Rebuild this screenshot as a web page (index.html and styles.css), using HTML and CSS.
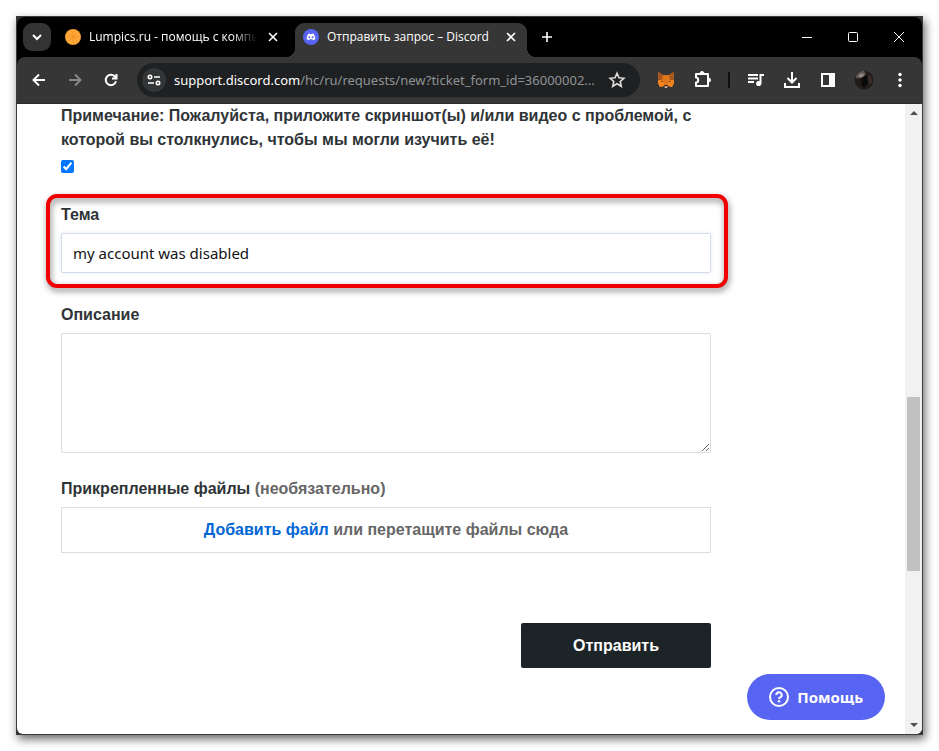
FILE: index.html
```
<!DOCTYPE html>
<html lang="ru">
<head>
    <meta charset="UTF-8">
    <meta name="viewport" content="width=device-width, initial-scale=1.0">
    <title>Отправить запрос – Discord</title>
    <link rel="stylesheet" href="styles.css">
</head>
<body>

    <div class="window">
        <div class="tab-strip">
            <button class="tab-search" type="button" aria-label="Поиск вкладок">
                <svg width="16" height="16" viewBox="0 0 16 16"><path d="M4 6l4 4 4-4"/></svg>
            </button>

            <div class="tab">
                <svg class="favicon" width="16" height="16" viewBox="0 0 16 16">
                    <circle cx="8" cy="8" r="8" fill="#f39a2c"/>
                    <circle cx="8" cy="8" r="7" fill="#ffa93a"/>
                    <path d="M8 2v12M2 8h12M4 4l8 8M12 4l-8 8" stroke="#f39422" stroke-width="1"/>
                </svg>
                <span class="tab-title tab-title-faded">Lumpics.ru - помощь с компь</span>
                <button class="tab-close" type="button" aria-label="Закрыть">
                    <svg width="16" height="16" viewBox="0 0 16 16"><path d="M4 4l8 8M12 4l-8 8"/></svg>
                </button>
            </div>

            <div class="tab tab-active">
                <svg class="favicon" width="16" height="16" viewBox="0 0 16 16">
                    <circle cx="8" cy="8" r="8" fill="#5865f2"/>
                    <path d="M5.200 4.900l1.500-.5.4.6h1.800l.4-.6 1.500.5c1 1.500 1.600 3.200 1.500 5.200-.6.6-1.400.9-2.200 1.100l-.6-.9h-3l-.6.9c-.8-.2-1.600-.5-2.200-1.100-.1-2 .5-3.700 1.500-5.200z" fill="#fff"/>
                    <circle cx="6.300" cy="8.200" r="1" fill="#5865f2"/>
                    <circle cx="9.700" cy="8.200" r="1" fill="#5865f2"/>
                </svg>
                <span class="tab-title">Отправить запрос – Discord</span>
                <button class="tab-close" type="button" aria-label="Закрыть">
                    <svg width="16" height="16" viewBox="0 0 16 16"><path d="M4 4l8 8M12 4l-8 8"/></svg>
                </button>
            </div>

            <button class="new-tab" type="button" aria-label="Новая вкладка">
                <svg width="16" height="16" viewBox="0 0 16 16"><path d="M8 3v10M3 8h10"/></svg>
            </button>

            <div class="window-controls">
                <button type="button" aria-label="Свернуть"><svg width="12" height="12" viewBox="0 0 12 12"><path d="M1 6.500h10"/></svg></button>
                <button type="button" aria-label="Развернуть"><svg width="12" height="12" viewBox="0 0 12 12"><rect x="1.500" y="1.500" width="9" height="9" rx="1"/></svg></button>
                <button type="button" aria-label="Закрыть окно"><svg width="12" height="12" viewBox="0 0 12 12"><path d="M1 1l10 10M11 1L1 11"/></svg></button>
            </div>
        </div>

        <div class="toolbar">
            <button class="tool" type="button" aria-label="Назад">
                <svg width="20" height="20" viewBox="0 0 20 20"><path d="M16 10H5M10 4.500L4.500 10l5.500 5.500"/></svg>
            </button>
            <button class="tool tool-disabled" type="button" aria-label="Вперёд">
                <svg width="20" height="20" viewBox="0 0 20 20"><path d="M4 10h11M10 4.500l5.500 5.500-5.500 5.500"/></svg>
            </button>
            <button class="tool" type="button" aria-label="Обновить">
                <svg width="20" height="20" viewBox="0 0 20 20"><path d="M15 11.300A5.200 5.200 0 1 1 13.700 6.300L15.500 8M15.500 4v4.500H11"/></svg>
            </button>

            <div class="omnibox">
                <button class="site-info" type="button" aria-label="Сведения о сайте">
                    <svg width="16" height="16" viewBox="0 0 16 16"><circle cx="4" cy="5" r="1.700"/><path d="M8 5h6M2 11h6"/><circle cx="12" cy="11" r="1.700"/></svg>
                </button>
                <span class="url"><span class="url-host">support.discord.com</span>/hc/ru/requests/new?ticket_form_id=36000002...</span>
                <button class="bookmark" type="button" aria-label="Добавить в закладки">
                    <svg width="20" height="20" viewBox="0 0 20 20"><path d="M10 3.300l2 4.500 4.900.5-3.700 3.200 1.100 4.800L10 13.800l-4.300 2.500 1.100-4.800-3.700-3.200 4.900-.5z"/></svg>
                </button>
            </div>

            <div class="extensions">
                <button class="tool" type="button" aria-label="MetaMask">
                    <svg class="filled" width="18" height="18" viewBox="0 0 18 18">
                        <path d="M1 1l5 3h6l5-3-.5 7 .5 4-2 4-4-1-1 1.500H8L7 15l-4 1-2-4 .5-4z" fill="#e2761b"/>
                        <path d="M1 1l5 3-1 5-3.500 0zM17 1l-5 3 1 5 3.500 0z" fill="#a8571f"/>
                        <path d="M1.500 9L6 9l1 6-4 1-2-4zM16.500 9L12 9l-1 6 4 1 2-4z" fill="#f6851b"/>
                        <path d="M4.500 9.500l2 1-2 .5zM13.500 9.500l-2 1 2 .5zM7.500 14h3l.5 1.500H7z" fill="#222c38"/>
                        <path d="M7.500 15.500h3l-.5 1.500H8z" fill="#d7c1b3"/>
                    </svg>
                </button>
                <button class="tool" type="button" aria-label="Расширения">
                    <svg width="20" height="20" viewBox="0 0 20 20"><path d="M4 4h12v12H4v-3.500c3 0 3-5 0-5z" stroke-linejoin="round"/><path d="M8 3.500a2 2 0 0 1 4 0zM16.500 8a2 2 0 0 1 0 4z" fill="#fff" stroke-width="1"/></svg>
                </button>
            </div>
            <span class="divider"></span>
            <button class="tool" type="button" aria-label="Управление мультимедиа">
                <svg width="20" height="20" viewBox="0 0 20 20"><path d="M2 5h10M2 8.500h10M2 12h6M14.500 13.500V5H18"/><circle cx="12.700" cy="13.500" r="1.600" fill="#fff"/></svg>
            </button>
            <button class="tool" type="button" aria-label="Загрузки">
                <svg width="20" height="20" viewBox="0 0 20 20"><path d="M10 2v10M5.500 8l4.500 4.500L14.500 8M3 13v4h14v-4"/></svg>
            </button>
            <button class="tool" type="button" aria-label="Боковая панель">
                <svg width="20" height="20" viewBox="0 0 20 20"><path d="M4 4h12v12H4z"/><path d="M12 4h4v12h-4z" fill="#fff"/></svg>
            </button>
            <button class="tool" type="button" aria-label="Профиль">
                <svg class="filled" width="20" height="20" viewBox="0 0 20 20">
                    <circle cx="10" cy="10" r="9.500" fill="#211c19"/>
                    <path d="M1.500 7C3 3 7 .5 10 .5l2 4-4 3-5 1z" fill="#5a544e"/>
                    <path d="M4 5l5-2 1 3-4 2z" fill="#8f887f"/>
                    <path d="M8 8l5-3 1 8-4 5-3-4z" fill="#0b0a0a"/>
                    <path d="M14 5l3 1 1 6-3 3z" fill="#3b2f28"/>
                </svg>
            </button>
            <button class="tool" type="button" aria-label="Меню">
                <svg class="filled" width="20" height="20" viewBox="0 0 20 20"><circle cx="10" cy="4.500" r="1.700" fill="#fff"/><circle cx="10" cy="10" r="1.700" fill="#fff"/><circle cx="10" cy="15.500" r="1.700" fill="#fff"/></svg>
            </button>
        </div>

        <div class="viewport">
            <form class="request-form">
                <div class="form-field">
                    <label for="note">Примечание: Пожалуйста, приложите скриншот(ы) и/или видео с проблемой, с которой вы столкнулись, чтобы мы могли изучить её!</label>
                    <input type="checkbox" id="note" checked>
                </div>

                <div class="form-field highlighted">
                    <label for="subject">Тема</label>
                    <input type="text" id="subject" value="my account was disabled">
                </div>

                <div class="form-field form-field-description">
                    <label for="description">Описание</label>
                    <textarea id="description"></textarea>
                </div>

                <div class="form-field">
                    <span class="field-title">Прикрепленные файлы <span class="optional">(необязательно)</span></span>
                    <div class="upload-dropzone"><a href="#">Добавить файл</a> или перетащите файлы сюда</div>
                </div>

                <button class="submit" type="submit">Отправить</button>
            </form>

            <div class="scrollbar">
                <span class="arrow arrow-up"></span>
                <span class="thumb"></span>
                <span class="arrow arrow-down"></span>
            </div>

            <button class="help" type="button">
                <svg width="20" height="20" viewBox="0 0 20 20"><circle cx="10" cy="10" r="9"/><path d="M7.300 8a2.700 2.700 0 1 1 3.900 2.400c-.8.400-1.200.8-1.200 1.600"/><circle class="dot" cx="10" cy="14.300" r="1.200"/></svg>
                Помощь
            </button>
        </div>
    </div>

</body>
</html>
```

FILE: styles.css
```
* {
    box-sizing: border-box;
}

body {
    margin: 0;
    padding: 16px;
    min-height: 100vh;
    display: flex;
    background: #fff;
    font-family: "Liberation Sans", Arial, sans-serif;
    font-size: 16px;
    line-height: 24px;
    color: #2f3437;
}

button {
    margin: 0;
    padding: 0;
    border: 0;
    background: none;
    color: inherit;
    display: flex;
    align-items: center;
    justify-content: center;
}

svg {
    flex: none;
    fill: none;
    stroke: #fff;
    stroke-width: 2;
}

.favicon,
.filled {
    stroke: none;
}

.window {
    flex: 1;
    min-width: 0;
    display: flex;
    flex-direction: column;
    border: 1px solid #3a3a3a;
    background: #333;
    box-shadow: 2px 4px 9px rgba(0, 0, 0, 0.6);
}

/* Tabs */

.tab-strip {
    height: 40px;
    padding: 6px 0 0 6px;
    display: flex;
    align-items: flex-start;
    background: #000;
    border-radius: 8px 8px 0 0;
    font-family: "Open Sans", "Noto Sans", sans-serif;
    font-size: 12px;
    color: #fff;
}

.tab-search {
    width: 28px;
    height: 28px;
    border-radius: 9px;
    background: #333;
}

.tab {
    width: 244px;
    height: 34px;
    padding: 0 14px 6px 14px;
    display: flex;
    align-items: center;
    gap: 8px;
}

.tab-active {
    position: relative;
    width: 232px;
    padding: 0 8px 6px;
    background: #363636;
    border-radius: 9px 9px 0 0;
}

.tab-active::before,
.tab-active::after {
    content: "";
    position: absolute;
    bottom: 0;
    width: 9px;
    height: 9px;
}

.tab-active::before {
    right: 100%;
    background: radial-gradient(circle at 0 0, transparent 9px, #363636 9px);
}

.tab-active::after {
    left: 100%;
    background: radial-gradient(circle at 100% 0, transparent 9px, #363636 9px);
}

.tab-title {
    flex: 1;
    min-width: 0;
    white-space: nowrap;
}

.tab-title-faded {
    mask-image: linear-gradient(to right, #000 85%, transparent);
}

.tab-close,
.new-tab {
    width: 16px;
    height: 28px;
}

.tab-close svg {
    stroke-width: 1.600;
}

.new-tab {
    margin-left: 12px;
}

.new-tab svg {
    stroke-width: 1.600;
}

.window-controls {
    margin-left: auto;
    display: flex;
}

.window-controls button {
    width: 46px;
    height: 28px;
}

.window-controls svg {
    stroke-width: 1;
}

/* Toolbar */

.toolbar {
    height: 47px;
    padding: 0 4px;
    display: flex;
    align-items: center;
    background: #363636;
    border-bottom: 1px solid #2b2b2b;
    border-radius: 8px 8px 0 0;
    box-shadow: 0 -8px 0 #000;
    clip-path: inset(0);
}

.tool {
    width: 36px;
    height: 36px;
}

.tool-disabled {
    opacity: 0.4;
}

.omnibox {
    flex: 1;
    min-width: 0;
    height: 34px;
    margin-left: 8px;
    padding: 0 13px 0 5px;
    display: flex;
    align-items: center;
    border-radius: 17px;
    background: #1e2022;
    font-family: "Noto Sans", sans-serif;
    font-size: 13px;
}

.site-info {
    width: 24px;
    height: 24px;
    margin-right: 8px;
    border-radius: 50%;
    background: #333537;
}

.site-info svg {
    stroke-width: 1.600;
}

.url {
    flex: 1;
    min-width: 0;
    overflow: hidden;
    white-space: nowrap;
    color: #909396;
}

.url-host {
    color: #fff;
}

.bookmark svg {
    stroke: #ddd;
    stroke-width: 1.600;
}

.extensions {
    margin-left: 8px;
    display: flex;
}

.divider {
    width: 2px;
    height: 16px;
    margin: 0 8px;
    background: #111;
}

/* Page */

.viewport {
    position: relative;
    flex: 1;
    display: flex;
    justify-content: space-between;
    background: #fff;
    border-radius: 0 0 6px 6px;
    overflow: hidden;
}

.request-form {
    flex: 1;
    max-width: 694px;
    padding-left: 44px;
    font-weight: bold;
}

.form-field {
    position: relative;
    display: flex;
    flex-direction: column;
    gap: 6px;
    margin-bottom: 30px;
}

.form-field-description {
    margin-bottom: 24px;
}

.form-field input[type="checkbox"] {
    width: 13px;
    height: 13px;
    margin: 2px 0 0;
    accent-color: #0075ff;
}

.form-field input[type="text"],
.form-field textarea {
    width: 100%;
    border: 1px solid #ddd;
    border-radius: 2px;
    font-family: "Noto Sans", sans-serif;
    font-size: 15px;
    color: #111;
}

.form-field input[type="text"] {
    height: 40px;
    padding: 0 11px;
    border-color: #d5dbea;
    box-shadow: 0 0 4px #e3e9f5;
}

.form-field textarea {
    height: 120px;
    padding: 10px;
}

/* Red frame around the field that has to be filled in */
.highlighted::after {
    content: "";
    position: absolute;
    inset: -9px -17px -15px -15px;
    border: 4px solid #f00000;
    border-radius: 11px;
    filter: drop-shadow(1px 3px 3px rgba(0, 0, 0, 0.5));
    pointer-events: none;
}

.optional {
    color: #666;
}

.upload-dropzone {
    padding: 10px;
    border: 1px solid #ddd;
    text-align: center;
    color: #666;
}

.upload-dropzone a {
    color: #0066d6;
    text-decoration: none;
}

.submit {
    width: 190px;
    height: 45px;
    margin: 70px 0 24px auto;
    border-radius: 2px;
    background: #1d2428;
    font: inherit;
    color: #fff;
}

.scrollbar {
    width: 17px;
    padding: 7px 2px;
    display: flex;
    flex-direction: column;
    align-items: center;
    background: #f1f1f1;
}

.arrow {
    border: 4px solid transparent;
}

.arrow-up {
    border-top: 0;
    border-bottom-color: #505050;
}

.arrow-down {
    margin-top: auto;
    border-bottom: 0;
    border-top-color: #505050;
}

.thumb {
    width: 13px;
    height: 174px;
    margin-top: 282px;
    background: #c1c1c1;
}

.help {
    position: absolute;
    right: 37px;
    bottom: 14px;
    height: 46px;
    padding: 0 22px;
    gap: 8px;
    border-radius: 23px;
    background: #5865f2;
    font-family: "Noto Sans", sans-serif;
    font-size: 15px;
    font-weight: bold;
    color: #fff;
}

.help .dot {
    fill: #fff;
    stroke: none;
}
```
